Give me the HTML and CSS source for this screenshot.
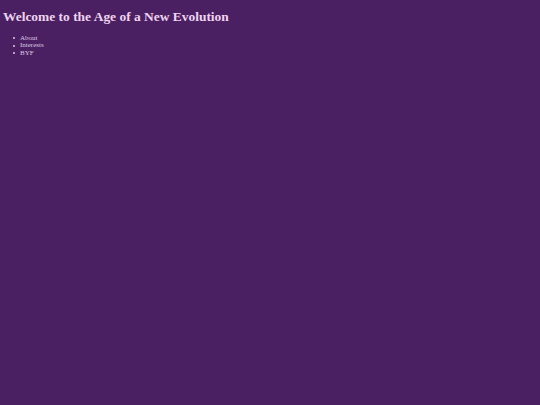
FILE: index.html
```html
<!DOCTYPE html>
<html>
<head>
<meta charset="utf-8">
<link rel="stylesheet" href="styles.css">
</head>
<body>
<h1 class="title">Welcome to the Age of a New Evolution</h1>
<ul class="nav">
<li class="nav-item">About</li>
<li class="nav-item">Interests</li>
<li class="nav-item">BYF</li>
</ul>
</body>
</html>
```
FILE: styles.css
```css
html, body {
  margin: 0;
  padding: 0;
  background: #4b2063;
  height: 100%;
}
body {
  padding: 4px 3px;
  box-sizing: border-box;
  font-family: "Liberation Serif", "Times New Roman", serif;
}
.title {
  margin: 4px 0 0 0;
  font-size: 13.45px;
  line-height: 17px;
  font-weight: bold;
  color: #eed4ef;
}
.nav {
  margin: 9.6px 0 0 0;
  padding-left: 10px;
  list-style: none;
  font-size: 7px;
  line-height: 7.5px;
  color: #dcc8e2;
}
.nav-item {
  display: flex;
  align-items: center;
}
.nav-item::before {
  content: "";
  width: 2.2px;
  height: 2.2px;
  border-radius: 50%;
  background: #dcc8e2;
  margin-right: 4.8px;
}
```
